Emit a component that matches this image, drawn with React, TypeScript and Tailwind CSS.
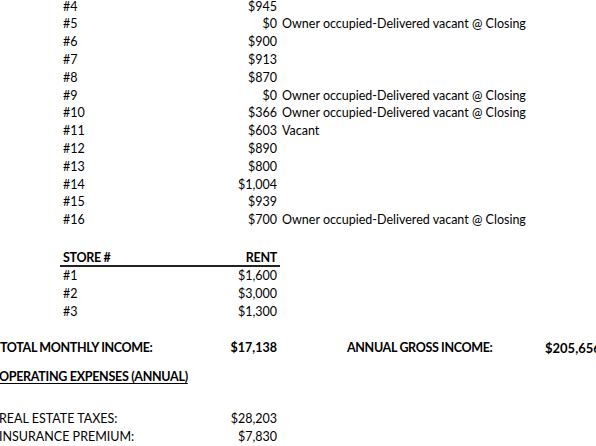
// App.tsx — rent roll sheet excerpt (tenants, stores, income, expenses)

const units = [
  { no: '#4', rent: '$945' },
  { no: '#5', rent: '$0', note: 'Owner occupied-Delivered vacant @ Closing' },
  { no: '#6', rent: '$900' },
  { no: '#7', rent: '$913' },
  { no: '#8', rent: '$870' },
  { no: '#9', rent: '$0', note: 'Owner occupied-Delivered vacant @ Closing' },
  { no: '#10', rent: '$366', note: 'Owner occupied-Delivered vacant @ Closing' },
  { no: '#11', rent: '$603', note: 'Vacant' },
  { no: '#12', rent: '$890' },
  { no: '#13', rent: '$800' },
  { no: '#14', rent: '$1,004' },
  { no: '#15', rent: '$939' },
  { no: '#16', rent: '$700', note: 'Owner occupied-Delivered vacant @ Closing' },
]

const stores = [
  { no: '#1', rent: '$1,600', h: 'h-[19px]' },
  { no: '#2', rent: '$3,000', h: 'h-[17.5px]' },
  { no: '#3', rent: '$1,300', h: 'h-[17.5px]' },
]

function Row({ no, rent, note, h }: { no: string; rent: string; note?: string; h: string }) {
  return (
    <div className={`flex items-center ${h}`}>
      <div className="w-[60px] shrink-0" />
      <div className="w-[160px] shrink-0 pl-[3px]">{no}</div>
      <div className="w-[60px] shrink-0 pr-[3px] text-right">{rent}</div>
      {note && <div className="pl-[2px] whitespace-nowrap">{note}</div>}
    </div>
  )
}

export default function App() {
  return (
    <div className="w-[596px] h-[446px] overflow-hidden bg-white text-black font-['Lato',sans-serif] text-[12.5px] leading-none">
      <div className="-mt-[2px]">
        {/* Apartments */}
        {units.map((u) => (
          <Row key={u.no} no={u.no} rent={u.rent} note={u.note} h="h-[17.8px]" />
        ))}

        {/* Stores */}
        <div className="mt-[23px] flex items-center h-[14.6px]">
          <div className="w-[60px] shrink-0" />
          <div className="w-[220px] shrink-0 flex border-b-2 border-[#222] h-full items-center font-bold tracking-[-0.3px]">
            <div className="w-[160px] pl-[3px]">STORE #</div>
            <div className="w-[60px] pr-[3px] text-right">RENT</div>
          </div>
        </div>
        {stores.map((s) => (
          <Row key={s.no} no={s.no} rent={s.rent} h={s.h} />
        ))}

        {/* Totals */}
        <div className="mt-[18.75px] flex items-center h-[17.5px] font-bold whitespace-nowrap">
          <div className="w-[220px] shrink-0 tracking-[-0.35px]">TOTAL MONTHLY INCOME:</div>
          <div className="w-[60px] shrink-0 pr-[3px] text-right">$17,138</div>
          <div className="w-[265px] shrink-0 pl-[67px] tracking-[-0.35px]">ANNUAL GROSS INCOME:</div>
          <div className="text-[13px]">$205,656</div>
        </div>

        {/* Expenses */}
        <div className="mt-[11.25px] flex items-center h-[17.5px] font-bold tracking-[-0.3px] underline underline-offset-2 -ml-[1px]">
          OPERATING EXPENSES (ANNUAL)
        </div>
        <div className="mt-[24.5px] flex items-center h-[17.5px] -ml-[1px]">
          <div className="w-[221px] shrink-0">REAL ESTATE TAXES:</div>
          <div className="w-[60px] shrink-0 pr-[3px] text-right">$28,203</div>
        </div>
        <div className="flex items-center h-[18.5px] -ml-[1px]">
          <div className="w-[221px] shrink-0">INSURANCE PREMIUM:</div>
          <div className="w-[60px] shrink-0 pr-[3px] text-right">$7,830</div>
        </div>
      </div>
    </div>
  )
}
